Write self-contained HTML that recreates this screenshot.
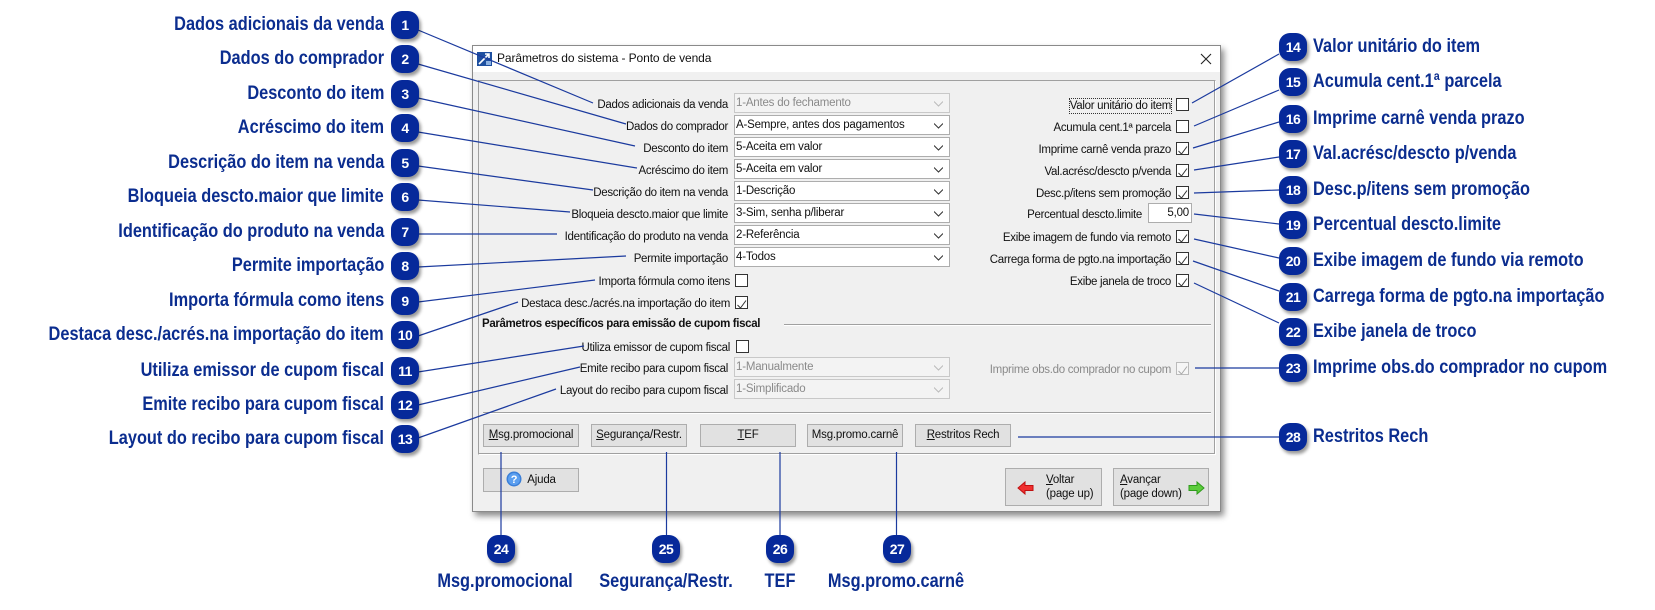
<!DOCTYPE html>
<html><head><meta charset="utf-8">
<style>
*{margin:0;padding:0;box-sizing:border-box}
body{width:1655px;height:610px;background:#fff;position:relative;overflow:hidden;font-family:"Liberation Sans",sans-serif}
.a{position:absolute}
.dlg{left:472px;top:45px;width:749px;height:467px;background:#f0f0f0;border:1px solid #8a8a8a;box-shadow:3px 4px 6px rgba(0,0,0,.45)}
.tb{left:0;top:0;width:747px;height:26px;background:#fff}
.panel{left:5px;top:34px;width:738px;height:375px;border:1px solid #a0a0a0;border-right-color:#fff;border-bottom-color:#fff;box-shadow:inset -1px -1px 0 #a0a0a0}
.lbl{position:absolute;font-size:11.5px;color:#111;letter-spacing:-0.3px;white-space:nowrap;line-height:14px;margin-top:3px}
.cb{position:absolute;background:#fff;border:1px solid #adadad;height:20px;font-size:11.5px;letter-spacing:-0.2px;line-height:18px;padding-left:1px;color:#111}
.cb.dis{background:#f3f3f3;color:#8a8a8a;border-color:#c8c8c8}
.cb svg{position:absolute;right:6px;top:7px}
.chk{position:absolute;width:13px;height:13px;background:#fff;border:1px solid #333}
.chk.dis{border-color:#bbb;background:#f6f6f6}
.btn{position:absolute;background:#e1e1e1;border:1px solid #adadad;font-size:11.5px;letter-spacing:-0.2px;color:#111;text-align:center;line-height:21px;height:23px;width:96px}
.bd{position:absolute;width:28px;height:28px;border-radius:11px;background:#06299a;color:#fff;font:bold 14px "Liberation Sans",sans-serif;text-align:center;line-height:28px;box-shadow:2px 3px 3px rgba(0,0,0,.4);letter-spacing:-0.5px}
.tl{position:absolute;font:bold 19px "Liberation Sans",sans-serif;color:#0b2d8f;white-space:nowrap;line-height:22px;transform:scaleX(.86)}
.L{transform-origin:right center;text-align:right}
.R{transform-origin:left center}
.C{transform-origin:center center;text-align:center}
u{text-decoration:underline}
</style></head><body>

<div class="a dlg">
  <div class="a tb"></div>
  <svg class="a" style="left:4px;top:6px" width="15" height="14"><rect width="15" height="14" fill="#1d4fa0"/><path d="M2 12 L12 2 M8 2 H12 V6" stroke="#fff" stroke-width="1.6" fill="none"/><rect x="9" y="9" width="5" height="4" fill="#8bb0e0"/></svg>
  <div class="lbl" style="left:24px;top:5px;font-size:12px;letter-spacing:-0.1px;margin-top:0">Parâmetros do sistema - Ponto de venda</div>
  <svg class="a" style="left:727px;top:7px" width="12" height="12"><path d="M1 1L11 11M11 1L1 11" stroke="#222" stroke-width="1.1"/></svg>
  <div class="a panel"></div>
</div>

<div class="lbl" style="right:927px;top:95px">Dados adicionais da venda</div>
<div class="lbl" style="right:927px;top:117px">Dados do comprador</div>
<div class="lbl" style="right:927px;top:139px">Desconto do item</div>
<div class="lbl" style="right:927px;top:161px">Acréscimo do item</div>
<div class="lbl" style="right:927px;top:183px">Descrição do item na venda</div>
<div class="lbl" style="right:927px;top:205px">Bloqueia descto.maior que limite</div>
<div class="lbl" style="right:927px;top:227px">Identificação do produto na venda</div>
<div class="lbl" style="right:927px;top:249px">Permite importação</div>
<div class="lbl" style="right:925px;top:272px">Importa fórmula como itens</div>
<div class="lbl" style="right:925px;top:294px">Destaca desc./acrés.na importação do item</div>

<div class="cb dis" style="left:734px;top:93px;width:216px">1-Antes do fechamento<svg width="9" height="6"><path d="M0 0.5L4.5 5L9 0.5" stroke="#bbb" fill="none"/></svg></div>
<div class="cb" style="left:734px;top:115px;width:216px">A-Sempre, antes dos pagamentos<svg width="9" height="6"><path d="M0 0.5L4.5 5L9 0.5" stroke="#333" fill="none"/></svg></div>
<div class="cb" style="left:734px;top:137px;width:216px">5-Aceita em valor<svg width="9" height="6"><path d="M0 0.5L4.5 5L9 0.5" stroke="#333" fill="none"/></svg></div>
<div class="cb" style="left:734px;top:159px;width:216px">5-Aceita em valor<svg width="9" height="6"><path d="M0 0.5L4.5 5L9 0.5" stroke="#333" fill="none"/></svg></div>
<div class="cb" style="left:734px;top:181px;width:216px">1-Descrição<svg width="9" height="6"><path d="M0 0.5L4.5 5L9 0.5" stroke="#333" fill="none"/></svg></div>
<div class="cb" style="left:734px;top:203px;width:216px">3-Sim, senha p/liberar<svg width="9" height="6"><path d="M0 0.5L4.5 5L9 0.5" stroke="#333" fill="none"/></svg></div>
<div class="cb" style="left:734px;top:225px;width:216px">2-Referência<svg width="9" height="6"><path d="M0 0.5L4.5 5L9 0.5" stroke="#333" fill="none"/></svg></div>
<div class="cb" style="left:734px;top:247px;width:216px">4-Todos<svg width="9" height="6"><path d="M0 0.5L4.5 5L9 0.5" stroke="#333" fill="none"/></svg></div>

<div class="chk" style="left:735px;top:274px"></div>
<div class="chk" style="left:735px;top:296px"><svg width="11" height="11"><path d="M1.5 6L4.5 9L10 1.5" stroke="#333" fill="none"/></svg></div>

<div class="lbl" style="left:482px;top:317px;font-weight:bold;font-size:11.5px;letter-spacing:-0.35px;margin-top:0">Parâmetros específicos para emissão de cupom fiscal</div>
<div class="a" style="left:784px;top:324px;width:427px;height:1px;background:#a0a0a0;box-shadow:0 1px 0 #fff"></div>

<div class="lbl" style="right:925px;top:338px">Utiliza emissor de cupom fiscal</div>
<div class="chk" style="left:736px;top:340px"></div>
<div class="lbl" style="right:927px;top:359px">Emite recibo para cupom fiscal</div>
<div class="cb dis" style="left:734px;top:357px;width:216px">1-Manualmente<svg width="9" height="6"><path d="M0 0.5L4.5 5L9 0.5" stroke="#bbb" fill="none"/></svg></div>
<div class="lbl" style="right:927px;top:381px">Layout do recibo para cupom fiscal</div>
<div class="cb dis" style="left:734px;top:379px;width:216px">1-Simplificado<svg width="9" height="6"><path d="M0 0.5L4.5 5L9 0.5" stroke="#bbb" fill="none"/></svg></div>
<div class="lbl" style="right:484px;top:360px;color:#8a8a8a">Imprime obs.do comprador no cupom</div>
<div class="chk dis" style="left:1176px;top:362px"><svg width="11" height="11"><path d="M1.5 6L4.5 9L10 1.5" stroke="#aaa" fill="none"/></svg></div>

<div class="a" style="left:483px;top:412px;width:728px;height:1px;background:#a0a0a0;box-shadow:0 1px 0 #fff"></div>

<div class="lbl" style="right:484px;top:96px;outline:1px dotted #333">Valor unitário do item</div>
<div class="chk" style="left:1176px;top:98px"></div>
<div class="lbl" style="right:484px;top:118px">Acumula cent.1ª parcela</div>
<div class="chk" style="left:1176px;top:120px"></div>
<div class="lbl" style="right:484px;top:140px">Imprime carnê venda prazo</div>
<div class="chk" style="left:1176px;top:142px"><svg width="11" height="11"><path d="M1.5 6L4.5 9L10 1.5" stroke="#333" fill="none"/></svg></div>
<div class="lbl" style="right:484px;top:162px">Val.acrésc/descto p/venda</div>
<div class="chk" style="left:1176px;top:164px"><svg width="11" height="11"><path d="M1.5 6L4.5 9L10 1.5" stroke="#333" fill="none"/></svg></div>
<div class="lbl" style="right:484px;top:184px">Desc.p/itens sem promoção</div>
<div class="chk" style="left:1176px;top:186px"><svg width="11" height="11"><path d="M1.5 6L4.5 9L10 1.5" stroke="#333" fill="none"/></svg></div>
<div class="lbl" style="right:513px;top:205px">Percentual descto.limite</div>
<div class="cb" style="left:1148px;top:203px;width:44px;text-align:right;padding-right:2px">5,00</div>
<div class="lbl" style="right:484px;top:228px">Exibe imagem de fundo via remoto</div>
<div class="chk" style="left:1176px;top:230px"><svg width="11" height="11"><path d="M1.5 6L4.5 9L10 1.5" stroke="#333" fill="none"/></svg></div>
<div class="lbl" style="right:484px;top:250px">Carrega forma de pgto.na importação</div>
<div class="chk" style="left:1176px;top:252px"><svg width="11" height="11"><path d="M1.5 6L4.5 9L10 1.5" stroke="#333" fill="none"/></svg></div>
<div class="lbl" style="right:484px;top:272px">Exibe janela de troco</div>
<div class="chk" style="left:1176px;top:274px"><svg width="11" height="11"><path d="M1.5 6L4.5 9L10 1.5" stroke="#333" fill="none"/></svg></div>

<div class="btn" style="left:483px;top:424px"><u>M</u>sg.promocional</div>
<div class="btn" style="left:591px;top:424px"><u>S</u>egurança/Restr.</div>
<div class="btn" style="left:700px;top:424px"><u>T</u>EF</div>
<div class="btn" style="left:807px;top:424px">Ms<u>g</u>.promo.carnê</div>
<div class="btn" style="left:915px;top:424px"><u>R</u>estritos Rech</div>
<div class="btn" style="left:483px;top:468px;height:24px;line-height:22px"><svg style="vertical-align:-4px;margin-right:5px" width="16" height="16"><circle cx="8" cy="8" r="7.5" fill="#3a7fd8"/><circle cx="8" cy="8" r="6" fill="#5b9ff0"/><text x="8" y="12" font-size="11" font-weight="bold" fill="#fff" text-anchor="middle" font-family="Liberation Sans">?</text></svg>A<u>j</u>uda</div>
<div class="btn" style="left:1005px;top:468px;height:38px;width:97px;line-height:14px;text-align:left;padding:4px 0 0 40px">
<svg class="a" style="left:11px;top:12px" width="17" height="14"><path d="M1 7L8 1V4.5H16V9.5H8V13Z" fill="#f03030" stroke="#c01010"/></svg><u>V</u>oltar<br>(page up)</div>
<div class="btn" style="left:1113px;top:468px;height:38px;width:96px;line-height:14px;text-align:left;padding:4px 0 0 6px">
<svg class="a" style="left:74px;top:12px" width="17" height="14"><path d="M16 7L9 1V4.5H1V9.5H9V13Z" fill="#5ccc3c" stroke="#2f9a1c"/></svg><u>A</u>vançar<br>(page down)</div>

<svg class="a" style="left:0;top:0" width="1655" height="610">
<g stroke="#1b3a9e" stroke-width="1.2" fill="none">
<path d="M418 30L593 103"/><path d="M418 64L626 124"/><path d="M418 98L635 146"/><path d="M418 132L637 168"/>
<path d="M418 166L593 190"/><path d="M418 200L570 212"/><path d="M418 234L557 234"/><path d="M418 267L626 256"/>
<path d="M418 302L595 280"/><path d="M418 336L518 302"/><path d="M418 372L584 346"/><path d="M418 405L580 367"/><path d="M418 438L556 389"/>
<path d="M1192 103L1279 54"/><path d="M1194 126L1279 90"/><path d="M1193 148L1279 122"/><path d="M1194 170L1279 157"/>
<path d="M1194 193L1279 190"/><path d="M1194 214L1279 224"/><path d="M1194 239L1279 258"/><path d="M1193 261L1279 291"/>
<path d="M1194 283L1279 323"/><path d="M1195 368L1279 368"/><path d="M1018 437L1279 437"/>
<path d="M501 452V535"/><path d="M666.5 452V535"/><path d="M780 452V535"/><path d="M896.5 452V535"/>
</g></svg>

<div class="bd" style="left:391px;top:11px">1</div>
<div class="bd" style="left:391px;top:45px">2</div>
<div class="bd" style="left:391px;top:80px">3</div>
<div class="bd" style="left:391px;top:114px">4</div>
<div class="bd" style="left:391px;top:149px">5</div>
<div class="bd" style="left:391px;top:183px">6</div>
<div class="bd" style="left:391px;top:218px">7</div>
<div class="bd" style="left:391px;top:252px">8</div>
<div class="bd" style="left:391px;top:287px">9</div>
<div class="bd" style="left:391px;top:321px">10</div>
<div class="bd" style="left:391px;top:357px">11</div>
<div class="bd" style="left:391px;top:391px">12</div>
<div class="bd" style="left:391px;top:425px">13</div>

<div class="tl L" style="right:1271px;top:14px">Dados adicionais da venda</div>
<div class="tl L" style="right:1271px;top:48px">Dados do comprador</div>
<div class="tl L" style="right:1271px;top:83px">Desconto do item</div>
<div class="tl L" style="right:1271px;top:117px">Acréscimo do item</div>
<div class="tl L" style="right:1271px;top:152px">Descrição do item na venda</div>
<div class="tl L" style="right:1271px;top:186px">Bloqueia descto.maior que limite</div>
<div class="tl L" style="right:1271px;top:221px">Identificação do produto na venda</div>
<div class="tl L" style="right:1271px;top:255px">Permite importação</div>
<div class="tl L" style="right:1271px;top:290px">Importa fórmula como itens</div>
<div class="tl L" style="right:1271px;top:324px">Destaca desc./acrés.na importação do item</div>
<div class="tl L" style="right:1271px;top:360px">Utiliza emissor de cupom fiscal</div>
<div class="tl L" style="right:1271px;top:394px">Emite recibo para cupom fiscal</div>
<div class="tl L" style="right:1271px;top:428px">Layout do recibo para cupom fiscal</div>

<div class="bd" style="left:1279px;top:33px">14</div>
<div class="bd" style="left:1279px;top:68px">15</div>
<div class="bd" style="left:1279px;top:105px">16</div>
<div class="bd" style="left:1279px;top:140px">17</div>
<div class="bd" style="left:1279px;top:176px">18</div>
<div class="bd" style="left:1279px;top:211px">19</div>
<div class="bd" style="left:1279px;top:247px">20</div>
<div class="bd" style="left:1279px;top:283px">21</div>
<div class="bd" style="left:1279px;top:318px">22</div>
<div class="bd" style="left:1279px;top:354px">23</div>
<div class="bd" style="left:1279px;top:423px">28</div>

<div class="tl R" style="left:1313px;top:36px">Valor unitário do item</div>
<div class="tl R" style="left:1313px;top:71px">Acumula cent.1ª parcela</div>
<div class="tl R" style="left:1313px;top:108px">Imprime carnê venda prazo</div>
<div class="tl R" style="left:1313px;top:143px">Val.acrésc/descto p/venda</div>
<div class="tl R" style="left:1313px;top:179px">Desc.p/itens sem promoção</div>
<div class="tl R" style="left:1313px;top:214px">Percentual descto.limite</div>
<div class="tl R" style="left:1313px;top:250px">Exibe imagem de fundo via remoto</div>
<div class="tl R" style="left:1313px;top:286px">Carrega forma de pgto.na importação</div>
<div class="tl R" style="left:1313px;top:321px">Exibe janela de troco</div>
<div class="tl R" style="left:1313px;top:357px">Imprime obs.do comprador no cupom</div>
<div class="tl R" style="left:1313px;top:426px">Restritos Rech</div>

<div class="bd" style="left:487px;top:535px">24</div>
<div class="bd" style="left:652px;top:535px">25</div>
<div class="bd" style="left:766px;top:535px">26</div>
<div class="bd" style="left:883px;top:535px">27</div>

<div class="tl C" style="left:405px;width:200px;top:571px">Msg.promocional</div>
<div class="tl C" style="left:566px;width:200px;top:571px">Segurança/Restr.</div>
<div class="tl C" style="left:720px;width:120px;top:571px">TEF</div>
<div class="tl C" style="left:796px;width:200px;top:571px">Msg.promo.carnê</div>

</body></html>
